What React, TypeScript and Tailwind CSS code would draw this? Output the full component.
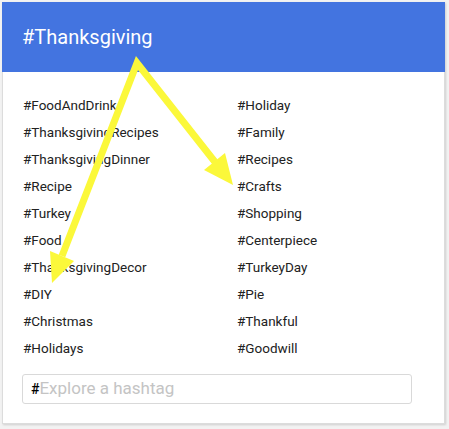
import React from "react";

const leftTags = [
    "#FoodAndDrink",
    "#ThanksgivingRecipes",
    "#ThanksgivingDinner",
    "#Recipe",
    "#Turkey",
    "#Food",
    "#ThanksgivingDecor",
    "#DIY",
    "#Christmas",
    "#Holidays",
];

const rightTags = [
    "#Holiday",
    "#Family",
    "#Recipes",
    "#Crafts",
    "#Shopping",
    "#Centerpiece",
    "#TurkeyDay",
    "#Pie",
    "#Thankful",
    "#Goodwill",
];

// yellow annotation arrows drawn on top of the card
const Arrows: React.FC = () => (
    <svg
        className="absolute inset-0 pointer-events-none"
        width="449"
        height="429"
        viewBox="0 0 449 429"
    >
        <polyline
            points="62,256 137,63 215,162"
            fill="none"
            stroke="#fbf83a"
            strokeWidth="7"
            strokeLinejoin="miter"
        />
        <polygon points="74,261 50,251 52,283" fill="#fbf83a" />
        <polygon points="204,170 225,153 233,185" fill="#fbf83a" />
    </svg>
);

const App: React.FC = () => {
    return (
        <div className="relative w-[449px] h-[429px] bg-[#f2f2f2] pt-[2px] pl-[2px] font-['Roboto',sans-serif]">
            <div className="w-[443px] h-[422px] bg-white border border-[#dcdcdc] shadow-[1px_1px_2px_rgba(0,0,0,0.15)] flex flex-col">
                <div className="h-[70px] bg-[#4374e0] flex items-center pl-[20px] -mx-px -mt-px">
                    <span className="text-white text-[20px]">#Thanksgiving</span>
                </div>

                <div className="grid grid-cols-[214px_1fr] pl-[20px] pt-[20px]">
                    <div className="flex flex-col">
                        {leftTags.map((tag) => (
                            <div key={tag} className="h-[27px] flex items-center text-[13.5px] text-[#222]">
                                {tag}
                            </div>
                        ))}
                    </div>
                    <div className="flex flex-col">
                        {rightTags.map((tag) => (
                            <div key={tag} className="h-[27px] flex items-center text-[13.5px] text-[#222]">
                                {tag}
                            </div>
                        ))}
                    </div>
                </div>

                <div className="ml-[19px] mt-[12px] w-[390px] h-[30px] border border-[#d9d9d9] rounded-[3px] flex items-center pl-[8px] text-[17px]">
                    <span className="text-black font-medium text-[14px]">#</span>
                    <span className="text-[#c4c4c4]">Explore a hashtag</span>
                </div>
            </div>
            <Arrows />
        </div>
    );
};

export default App;
